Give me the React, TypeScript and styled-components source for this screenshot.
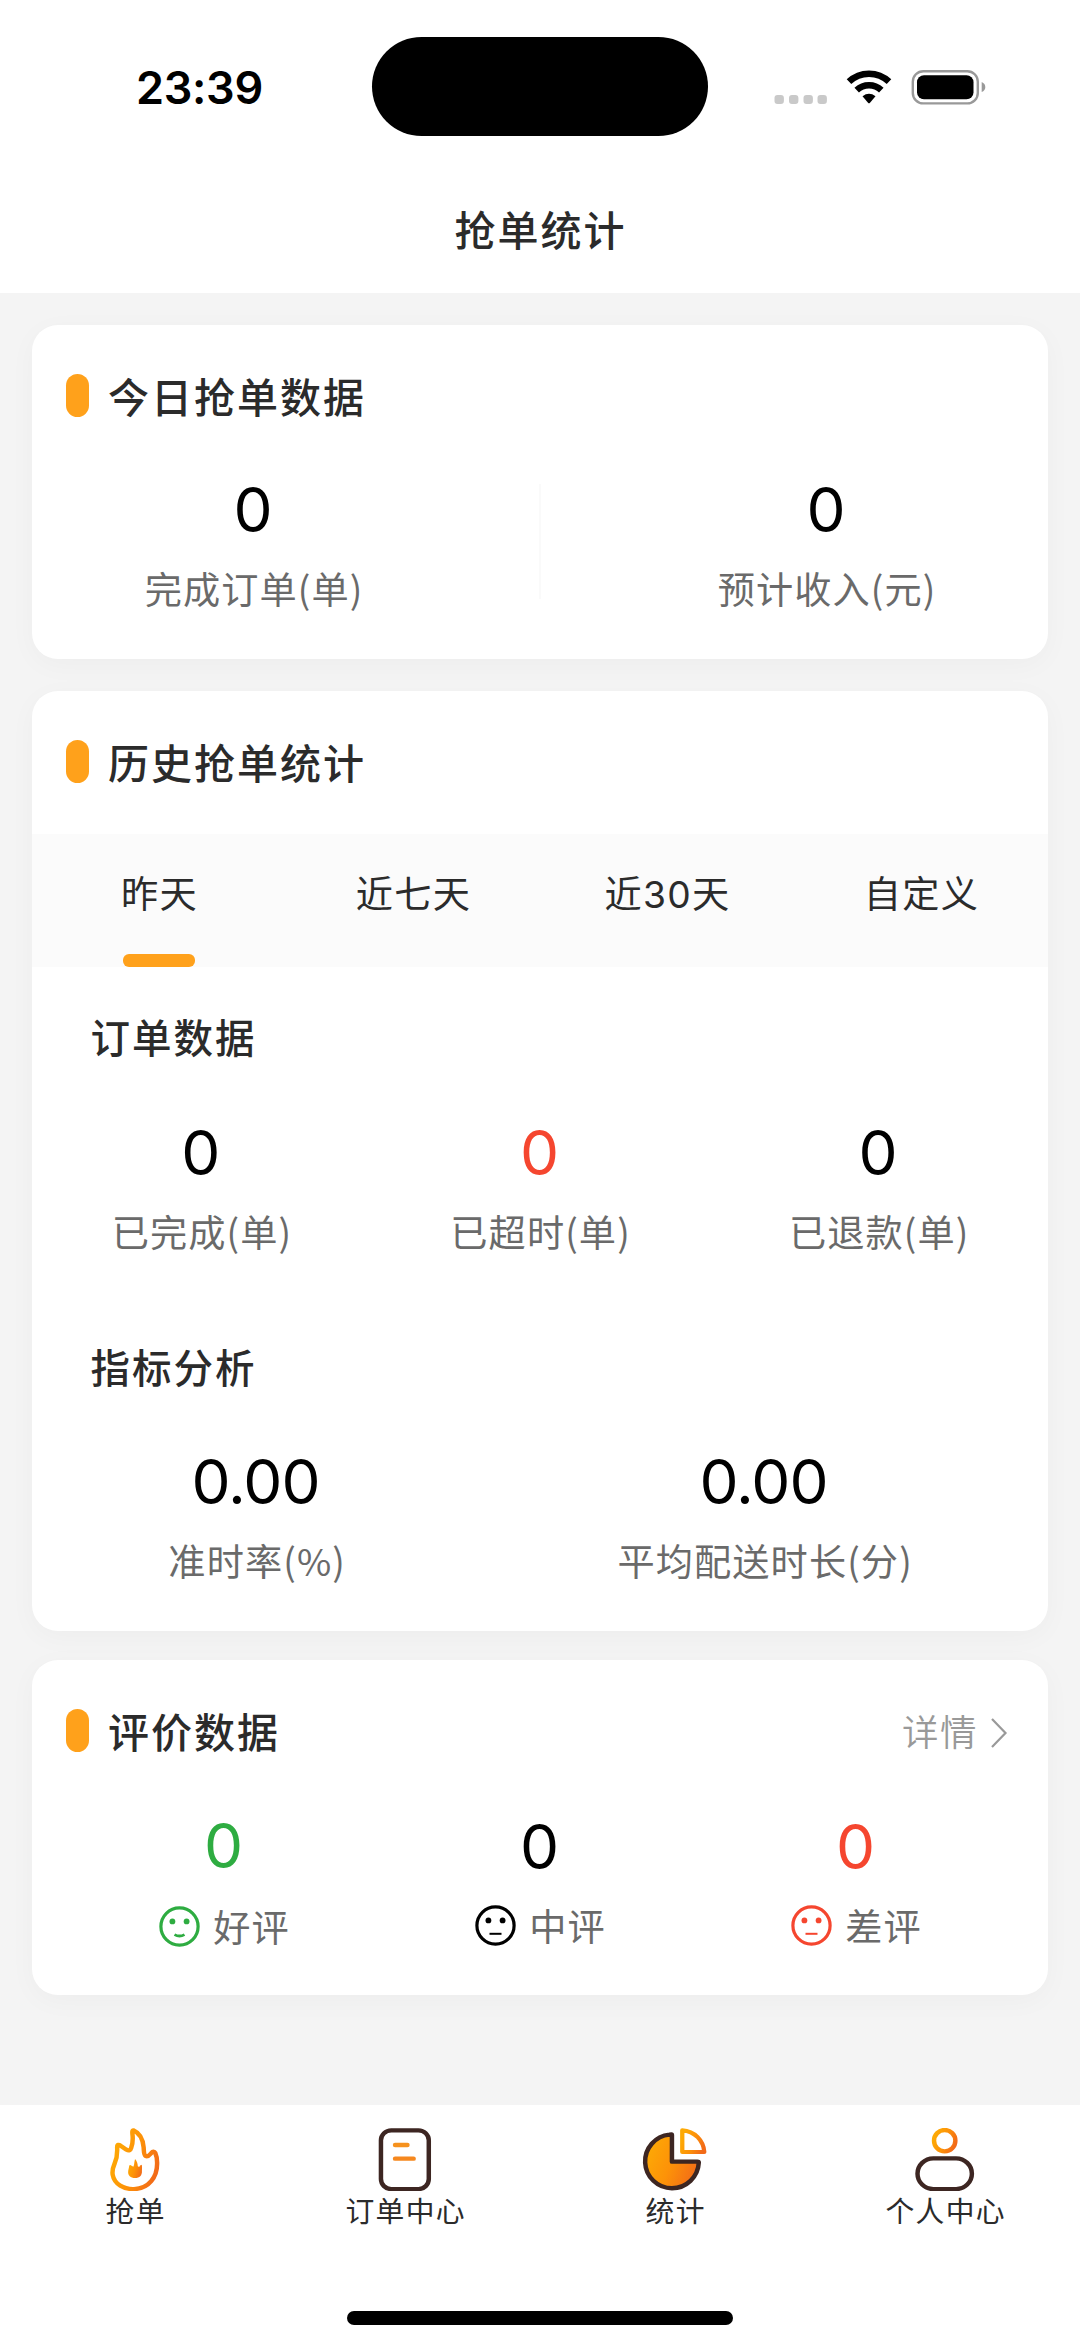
import React from 'react';
import styled, { createGlobalStyle } from 'styled-components';

const GlobalStyle = createGlobalStyle`
  * { box-sizing: border-box; }
  body { margin: 0; background: #f4f4f4; }
`;

const Screen = styled.div`
  width: 1080px;
  height: 2346px;
  display: flex;
  flex-direction: column;
  background: #f4f4f4;
  color: #2b2b2b;
  font-family: Inter, "Noto Sans CJK SC", sans-serif;
  overflow: hidden;
`;

const Header = styled.header`
  height: 293px;
  flex: none;
  background: #fff;
  display: flex;
  flex-direction: column;
`;

const StatusBar = styled.div`
  height: 173px;
  display: grid;
  grid-template-columns: 372px 336px 372px;
  align-items: center;
`;

const Clock = styled.div`
  padding: 1px 0 0 136px;
  font-size: 45px;
  font-weight: 600;
  letter-spacing: -0.3px;
  color: #000;
`;

const Island = styled.div`
  height: 99px;
  border-radius: 50px;
  background: #000;
`;

const StatusIcons = styled.div`
  display: flex;
  padding-left: 66px;
`;

const PageTitle = styled.h1`
  margin: 0;
  height: 115px;
  line-height: 117px;
  text-align: center;
  font-size: 41px;
  letter-spacing: 2px;
  text-indent: 1px;
  font-weight: 500;
`;

const Main = styled.main`
  flex: none;
  height: 1812px;
  padding: 32px 32px 0;
  display: flex;
  flex-direction: column;
`;

const Card = styled.section<{ $height: number; $after?: number }>`
  height: ${(p) => p.$height}px;
  margin-bottom: ${(p) => p.$after ?? 0}px;
  flex: none;
  background: #fff;
  border-radius: 26px;
  box-shadow: 0 6px 28px rgba(0, 0, 0, 0.03);
`;

const CardHead = styled.div<{ $height: number }>`
  height: ${(p) => p.$height}px;
  padding: 49px 40px 0 34px;
  display: flex;
  align-items: flex-start;
`;

const Marker = styled.span`
  width: 23px;
  height: 43px;
  border-radius: 12px;
  background: #ffa11b;
`;

const CardTitle = styled.h2`
  margin: 0 auto 0 19px;
  font-size: 41px;
  letter-spacing: 2px;
  line-height: 48px;
  font-weight: 500;
`;

const More = styled.a`
  display: flex;
  align-items: center;
  gap: 12px;
  height: 47px;
  font-size: 36.5px;
  letter-spacing: 1.5px;
  line-height: 44px;
  font-weight: 350;
  color: #999;
`;

const PairRow = styled.div`
  display: grid;
  grid-template-columns: 443px 1fr 443px;
`;

const Divider = styled.span`
  justify-self: center;
  width: 2px;
  height: 115px;
  margin-top: 10px;
  background: #fafafa;
`;

const TripleRow = styled.div<{ $inset?: number }>`
  display: grid;
  grid-template-columns: repeat(3, 1fr);
  padding: 0 ${(p) => p.$inset ?? 0}px;
`;

const AroundRow = styled.div`
  display: flex;
  justify-content: space-around;
`;

const StatBox = styled.div`
  display: flex;
  flex-direction: column;
  align-items: center;
`;

const Value = styled.span<{ $color?: string; $spread?: boolean }>`
  height: 70px;
  padding-right: 2px;
  line-height: ${(p) => (p.$spread ? 69 : 72)}px;
  font-size: 62px;
  letter-spacing: -1px;
  color: ${(p) => p.$color ?? '#000'};
`;

const Label = styled.span<{ $spread?: boolean }>`
  height: 60px;
  margin-top: ${(p) => (p.$spread ? 15 : 14)}px;
  padding-left: 1.2px;
  display: flex;
  align-items: center;
  gap: 13px;
  white-space: nowrap;
  font-family: "Noto Sans CJK SC", sans-serif;
  font-size: 37.2px;
  letter-spacing: 1.1px;
  line-height: 58px;
  font-weight: 400;
  color: #6a6a6a;
`;

const Tabs = styled.nav`
  height: 133px;
  display: grid;
  grid-template-columns: repeat(4, 1fr);
  background: #fbfbfb;
`;

const Tab = styled.button<{ $active?: boolean }>`
  border: 0;
  padding: 2px 0 0;
  background: none;
  display: flex;
  flex-direction: column;
  align-items: center;
  justify-content: space-between;
  font: 400 37.2px/118px Inter, "Noto Sans CJK SC", sans-serif;
  letter-spacing: 1.3px;
  text-indent: 1px;
  color: #2b2b2b;

  &::after {
    content: '';
    width: 72px;
    height: 13px;
    border-radius: 6px;
    background: ${(p) => (p.$active ? '#ffa11b' : 'transparent')};
  }
`;

const SubTitle = styled.h3<{ $height: number; $offset?: number }>`
  margin: 0;
  height: ${(p) => p.$height}px;
  padding: ${(p) => p.$offset ?? 0}px 0 0 58.5px;
  font-size: 39.5px;
  letter-spacing: 2px;
  line-height: 145px;
  font-weight: 500;
`;

const TabBar = styled.footer`
  flex: 1;
  background: #fff;
  display: flex;
  flex-direction: column;
  justify-content: space-between;
  align-items: center;
  padding: 23px 0 21.5px;
`;

const TabBarItems = styled.div`
  width: 100%;
  display: grid;
  grid-template-columns: repeat(4, 1fr);
`;

const TabBarItem = styled.a`
  display: flex;
  flex-direction: column;
  align-items: center;
  font-size: 28.8px;
  letter-spacing: 1.3px;
  text-indent: 1.3px;
  line-height: 42px;
`;

const HomeIndicator = styled.div`
  width: 386px;
  height: 13.5px;
  border-radius: 7px;
  background: #000;
`;

const SignalIcons = () => (
  <svg width="220" height="40" viewBox="774 67 220 40">
    {[774.5, 789, 803.5, 817.5].map((x) => (
      <rect key={x} x={x} y="95" width="9.4" height="9" rx="3" fill="#c9c9c9" />
    ))}
    <g fill="none" stroke="#000" strokeWidth="6.6">
      <path d="M849 81.7A29 29 0 0 1 889 81.7" />
      <path d="M856.7 90.1A18 18 0 0 1 881.3 90.1" />
    </g>
    <path d="M862.5 96.2Q869 91.5 875.5 96.2L870 102.7Q869 103.8 868 102.7Z" />
    <rect x="912.8" y="71.2" width="65" height="32.2" rx="10.5" fill="none" stroke="#999" strokeWidth="2.4" />
    <rect x="917" y="75.3" width="56.5" height="24" rx="7" />
    <path d="M981.7 82Q985.3 83.5 985.3 87T981.7 92Z" fill="#999" />
  </svg>
);

const Chevron = () => (
  <svg width="18" height="32" viewBox="0 0 18 32" fill="none" stroke="#999" strokeWidth="2.2">
    <path d="M2 2L15.5 16L2 30" />
  </svg>
);

const Face = ({ color, smile }: { color: string; smile?: boolean }) => (
  <svg width="41" height="41" viewBox="0 0 41 41" fill="none" stroke={color} strokeWidth="3.2">
    <circle cx="20.5" cy="20.5" r="18.6" />
    <g fill={color} stroke="none">
      <circle cx="13.4" cy="15.4" r="2.9" />
      <circle cx="27.6" cy="15.4" r="2.9" />
    </g>
    <path d={smile ? 'M15.5 28.6Q20.5 31.4 25.5 28.6' : 'M14.5 28.8H26.5'} strokeWidth={smile ? 2.8 : 2} />
  </svg>
);

const Warm = ({ id }: { id: string }) => (
  <defs>
    <linearGradient id={id} x1="0" y1="0.3" x2="1" y2="0.7">
      <stop offset="0" stopColor="#fdaa05" />
      <stop offset="0.5" stopColor="#fd9208" />
      <stop offset="1" stopColor="#f26a18" />
    </linearGradient>
  </defs>
);

const NavSvg = styled.svg.attrs({ viewBox: '0 0 190 190', preserveAspectRatio: 'none' })`
  width: 65.4px;
  height: 63.4px;
  fill: none;
  stroke-linejoin: round;
  stroke-linecap: round;
`;

const FlameIcon = () => (
  <NavSvg>
    <Warm id="flame" />
    <path
      d="M91 7C87 7 88 15 89 24C90 37 89 47 85 59C83 67 78 69 71 65L54 53C49 49 44 49 44 58C45 78 43 91 37 105C32 117 29 127 31 140C36 169 64 184 93 183C135 182 162 148 160 102C160 92 158 82 155 75C152 69 147 70 143 75C138 81 134 87 127 84C121 81 122 72 121 58C119 36 109 15 91 7Z"
      stroke="url(#flame)"
      strokeWidth="13"
    />
    <path
      d="M96 93C101 98 104 106 104 115L108 117Q110 111 115 110Q117 112 116 128C117 142 109 150 96 150C83 150 75 142 76 131C76 125 78 122 79 113Q81 109 86 113L91 116C95 109 93 102 96 93Z"
      fill="url(#flame)"
    />
  </NavSvg>
);

const OrdersIcon = () => (
  <NavSvg strokeWidth="13">
    <rect x="26" y="7" width="139" height="176" rx="30" stroke="#3d2622" />
    <path d="M67 51H103" stroke="#f6921e" />
    <path d="M67 92H121" stroke="#f6881e" />
  </NavSvg>
);

const StatsIcon = () => (
  <NavSvg>
    <Warm id="pie" />
    <path
      d="M87 21C87 18 84 19 80 20A78 80.5 0 1 0 165 104Q165 101 161 101H87Z"
      fill="url(#pie)"
      stroke="#3d2622"
      strokeWidth="13"
    />
    <path d="M117 7V72H181C179 38 153 9 117 7Z" stroke="url(#pie)" strokeWidth="12.5" />
  </NavSvg>
);

const ProfileIcon = () => (
  <NavSvg strokeWidth="13">
    <Warm id="head" />
    <ellipse cx="95" cy="38" rx="31" ry="32" stroke="url(#head)" />
    <rect x="16" y="91" width="158" height="92" rx="46" stroke="#3d2622" />
  </NavSvg>
);

const RED = '#f5462f';
const GREEN = '#2eac41';

interface StatProps {
  value: string;
  label: string;
  color?: string;
  icon?: React.ReactNode;
  spread?: boolean;
}

const Stat = ({ value, label, color, icon, spread }: StatProps) => (
  <StatBox>
    <Value $color={color} $spread={spread}>
      {value}
    </Value>
    <Label $spread={spread}>
      {icon}
      <span>{label}</span>
    </Label>
  </StatBox>
);

const ranges = ['昨天', '近七天', '近30天', '自定义'];

const navItems = [
  { label: '抢单', icon: <FlameIcon /> },
  { label: '订单中心', icon: <OrdersIcon /> },
  { label: '统计', icon: <StatsIcon /> },
  { label: '个人中心', icon: <ProfileIcon /> },
];

export default function App() {
  return (
    <Screen>
      <GlobalStyle />
      <Header>
        <StatusBar>
          <Clock>23:39</Clock>
          <Island />
          <StatusIcons>
            <SignalIcons />
          </StatusIcons>
        </StatusBar>
        <PageTitle>抢单统计</PageTitle>
      </Header>

      <Main>
        <Card $height={334} $after={32}>
          <CardHead $height={149}>
            <Marker />
            <CardTitle>今日抢单数据</CardTitle>
          </CardHead>
          <PairRow>
            <Stat value="0" label="完成订单(单)" />
            <Divider />
            <Stat value="0" label="预计收入(元)" />
          </PairRow>
        </Card>

        <Card $height={940} $after={29}>
          <CardHead $height={143}>
            <Marker />
            <CardTitle>历史抢单统计</CardTitle>
          </CardHead>
          <Tabs>
            {ranges.map((name, i) => (
              <Tab key={name} $active={i === 0}>
                {name}
              </Tab>
            ))}
          </Tabs>
          <SubTitle $height={150}>订单数据</SubTitle>
          <TripleRow>
            <Stat value="0" label="已完成(单)" />
            <Stat value="0" label="已超时(单)" color={RED} />
            <Stat value="0" label="已退款(单)" />
          </TripleRow>
          <SubTitle $height={185} $offset={36}>
            指标分析
          </SubTitle>
          <AroundRow>
            <Stat value="0.00" label="准时率(%)" />
            <Stat value="0.00" label="平均配送时长(分)" />
          </AroundRow>
        </Card>

        <Card $height={335}>
          <CardHead $height={151}>
            <Marker />
            <CardTitle>评价数据</CardTitle>
            <More>
              <span>详情</span>
              <Chevron />
            </More>
          </CardHead>
          <TripleRow $inset={34}>
            <Stat value="0" label="好评" color={GREEN} icon={<Face color={GREEN} smile />} spread />
            <Stat value="0" label="中评" icon={<Face color="#000" />} />
            <Stat value="0" label="差评" color={RED} icon={<Face color={RED} />} />
          </TripleRow>
        </Card>
      </Main>

      <TabBar>
        <TabBarItems>
          {navItems.map((item) => (
            <TabBarItem key={item.label}>
              {item.icon}
              {item.label}
            </TabBarItem>
          ))}
        </TabBarItems>
        <HomeIndicator />
      </TabBar>
    </Screen>
  );
}
